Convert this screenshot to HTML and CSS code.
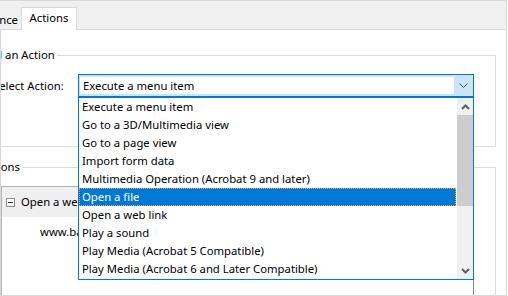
FILE: index.html
```html
<!DOCTYPE html>
<html>
<head>
<meta charset="utf-8">
<link rel="stylesheet" href="styles.css">
</head>
<body>
<div class="window">
  <div class="tabbar">
    <div class="tab">Appearance</div>
    <div class="tab active">Actions</div>
  </div>
  <div class="panel">
    <div class="content">
      <fieldset class="group g1">
        <legend>Add an Action</legend>
        <div class="row">
          <span class="row-label">Select Action:</span>
          <div class="combo">
            <div class="combo-field">Execute a menu item</div>
            <div class="combo-btn">
              <svg width="9" height="6" viewBox="0 0 9 6"><polyline points="0.5,0.5 4.5,4.5 8.5,0.5" fill="none" stroke="#4d4d4d" stroke-width="1"/></svg>
            </div>
            <div class="dropdown">
              <ul class="items">
                <li>Execute a menu item</li>
                <li>Go to a 3D/Multimedia view</li>
                <li>Go to a page view</li>
                <li>Import form data</li>
                <li>Multimedia Operation (Acrobat 9 and later)</li>
                <li class="selected">Open a file</li>
                <li>Open a web link</li>
                <li>Play a sound</li>
                <li>Play Media (Acrobat 5 Compatible)</li>
                <li>Play Media (Acrobat 6 and Later Compatible)</li>
              </ul>
              <div class="scrollbar">
                <div class="sb-btn">
                  <svg width="9" height="6" viewBox="0 0 9 6"><polyline points="1,5 4.5,1.5 8,5" fill="none" stroke="#606060" stroke-width="2"/></svg>
                </div>
                <div class="sb-thumb"></div>
                <div class="sb-track"></div>
                <div class="sb-btn">
                  <svg width="9" height="6" viewBox="0 0 9 6"><polyline points="1,1 4.5,4.5 8,1" fill="none" stroke="#606060" stroke-width="2"/></svg>
                </div>
              </div>
            </div>
          </div>
        </div>
      </fieldset>
      <fieldset class="group g2">
        <legend>Actions</legend>
        <div class="tree">
          <div class="tree-row current">
            <span class="minus"></span>
            <span>Open a web link</span>
          </div>
          <div class="tree-row child">www.baidu.com</div>
        </div>
      </fieldset>
    </div>
  </div>
</div>
</body>
</html>
```
FILE: styles.css
```css
* { box-sizing: border-box; }
html, body { margin: 0; padding: 0; background: #fff; }
body {
  font-family: "Noto Sans", "Open Sans", sans-serif;
  font-size: 11.3px;
  line-height: 16px;
  color: #000;
}
.window {
  width: 507px;
  height: 296px;
  border-right: 1px solid #d9d9d9;
  display: flex;
  flex-direction: column;
  overflow: hidden;
}
.tabbar {
  height: 30px;
  flex: none;
  background: #f0f0f0;
  border-top: 1px solid #d9d9d9;
  border-bottom: 1px solid #d9d9d9;
  display: flex;
  align-items: flex-end;
}
.tab {
  height: 19px;
  width: 80px;
  margin-left: -59px;
  padding-right: 3px;
  text-align: right;
  line-height: 18px;
  margin-bottom: -1px;
  white-space: nowrap;
}
.tab.active {
  width: 56px;
  margin-left: 0;
  height: 23px;
  padding: 2px 0 0;
  line-height: 16px;
  background: #fff;
  border: 1px solid #d9d9d9;
  border-bottom: none;
  text-align: center;
}
.panel {
  flex: 1;
  border-left: 1px solid #d9d9d9;
  border-bottom: 1px solid #d9d9d9;
  overflow: hidden;
}
.content {
  margin-left: -28px;
  padding-right: 10px;
}
.group {
  margin: 0;
  border: 1px solid #dcdcdc;
  padding: 0 21px 0 27px;
  min-width: 0;
}
.group legend {
  padding: 0 2px;
  line-height: 16px;
}
.g1 {
  margin-top: 17px;
  padding-left: 19px;
  padding-bottom: 49px;
}
.g1 legend { margin-left: -14px; }
.g2 {
  margin-top: 12px;
}
.g2 legend { margin-left: -22px; }
.row {
  margin-top: 11px;
  display: flex;
  align-items: center;
}
.row-label {
  width: 85px;
  flex: none;
  white-space: nowrap;
}
.combo {
  position: relative;
  width: 396px;
  height: 23px;
  border: 1px solid #0078d7;
  background: #cce4f7;
  display: flex;
  padding: 1px;
}
.combo-field {
  flex: 1;
  background: #fff;
  margin: 1px 0;
  padding-left: 3px;
  line-height: 17px;
}
.combo-btn {
  width: 18px;
  display: flex;
  align-items: center;
  justify-content: center;
}
.combo-btn svg { display: block; margin-left: 1px; }
.dropdown {
  position: absolute;
  left: -1px;
  top: 22px;
  width: 396px;
  height: 183px;
  border: 1px solid #0078d7;
  background: #fff;
  display: flex;
  z-index: 5;
}
.items {
  list-style: none;
  margin: 0;
  padding: 0;
  width: 377px;
  flex: none;
}
.items li {
  height: 18px;
  line-height: 18px;
  padding-left: 3px;
  white-space: nowrap;
}
.items li.selected {
  background: #0078d7;
  color: #fff;
  outline: 1px dotted #f0a050;
  outline-offset: -1px;
}
.scrollbar {
  margin-left: 1px;
  width: 16px;
  flex: none;
  background: #f0f0f0;
  display: flex;
  flex-direction: column;
}
.sb-btn {
  height: 17px;
  flex: none;
  display: flex;
  align-items: center;
  justify-content: center;
}
.sb-btn svg { display: block; }
.sb-thumb {
  height: 91px;
  flex: none;
  background: #cdcdcd;
}
.sb-track { flex: 1; }
.tree {
  margin-top: 11px;
  height: 140px;
  border: 1px solid #b4b4b4;
  border-right-color: #8a8a8a;
  background: #fff;
}
.tree-row {
  height: 30px;
  display: flex;
  align-items: center;
  white-space: nowrap;
}
.tree-row.current {
  background: #efefef;
  padding-left: 4px;
  gap: 6px;
}
.tree-row.child {
  padding-left: 38px;
}
.minus {
  width: 9px;
  height: 9px;
  border: 1px solid #919191;
  background: #fff;
  position: relative;
  flex: none;
}
.minus::after {
  content: "";
  position: absolute;
  left: 1px;
  right: 1px;
  top: 3px;
  height: 1px;
  background: #333;
}
```
